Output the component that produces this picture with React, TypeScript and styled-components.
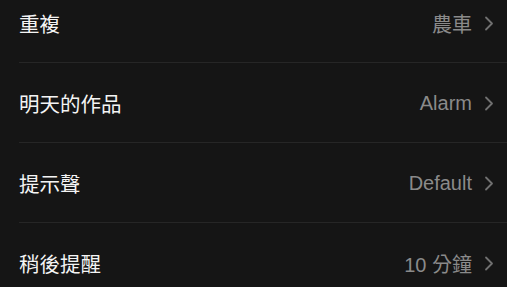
import React from 'react';
import styled, { createGlobalStyle } from 'styled-components';

const GlobalStyle = createGlobalStyle`
  html, body {
    margin: 0;
    padding: 0;
    background: #151515;
    overflow: hidden;
  }
  body {
    font-family: "Liberation Sans", "Noto Sans CJK TC", sans-serif;
    -webkit-font-smoothing: antialiased;
  }
`;

const Screen = styled.div`
  width: 507px;
  height: 287px;
  background: #151515;
  overflow: hidden;
`;

const List = styled.ul`
  list-style: none;
  margin: -17px 0 0;
  padding: 0 0 0 19px;
`;

const Row = styled.li<{ $last?: boolean }>`
  display: flex;
  align-items: center;
  justify-content: space-between;
  height: 79px;
  padding-right: 13px;
  border-bottom: ${({ $last }) => ($last ? 'none' : '1px solid #262626')};
`;

const Label = styled.span`
  color: #f4f4f4;
  font-size: 20.5px;
  font-weight: 400;
  font-family: "Noto Sans CJK TC", "Liberation Sans", sans-serif;
`;

const Detail = styled.span`
  display: flex;
  align-items: center;
  gap: 12px;
  padding-top: 1px;
`;

const Value = styled.span`
  color: #8a8a8a;
  font-size: 20px;
`;

const Chevron = () => (
  <svg width="10" height="15" viewBox="0 0 10 15" fill="none">
    <path
      d="M2 1.5 L8 7.5 L2 13.5"
      stroke="#707070"
      strokeWidth="1.8"
      strokeLinecap="round"
      strokeLinejoin="round"
    />
  </svg>
);

const settings = [
  { label: '重複', value: '農車' },
  { label: '明天的作品', value: 'Alarm' },
  { label: '提示聲', value: 'Default' },
  { label: '稍後提醒', value: '10 分鐘' },
];

const App = () => {
  return (
    <Screen>
      <GlobalStyle />
      <List>
        {settings.map((item, i) => (
          <Row key={item.label} $last={i === settings.length - 1}>
            <Label>{item.label}</Label>
            <Detail>
              <Value>{item.value}</Value>
              <Chevron />
            </Detail>
          </Row>
        ))}
      </List>
    </Screen>
  );
};

export default App;
